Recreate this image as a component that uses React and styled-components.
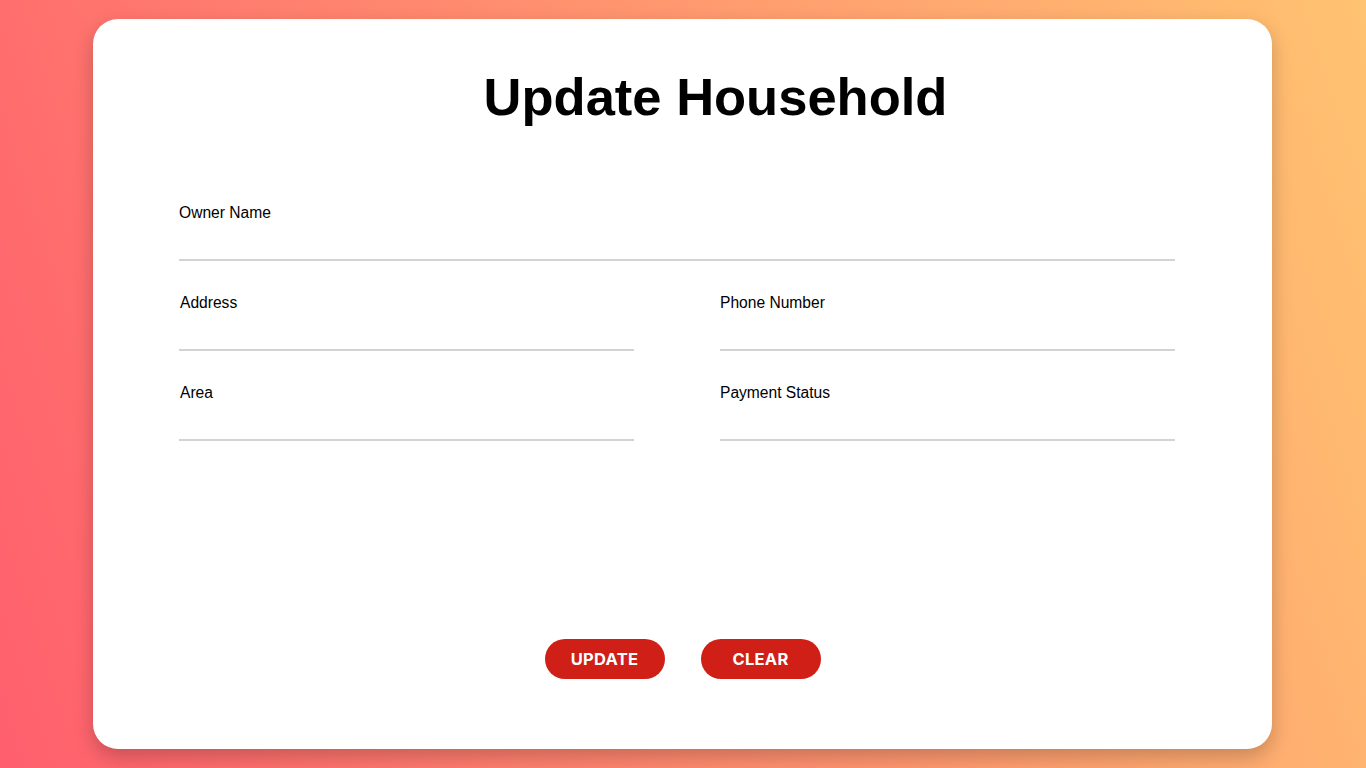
import React from "react";
import styled, { createGlobalStyle } from "styled-components";

const GlobalStyle = createGlobalStyle`
  * { box-sizing: border-box; }
  html, body { margin: 0; padding: 0; }
  body {
    font-family: "Liberation Sans", Arial, sans-serif;
    background: linear-gradient(72deg, #ff5f6d, #ffc371);
    min-height: 100vh;
  }
`;

const Page = styled.div`
  width: 100%;
  height: 100vh;
  padding-right: 1px;
  display: flex;
  align-items: center;
  justify-content: center;
`;

const Card = styled.div`
  width: 1179px;
  height: 730px;
  background: #ffffff;
  border-radius: 25px;
  box-shadow: 0 8px 20px rgba(0, 0, 0, 0.22);
  padding: 48px 97px 70px 86px;
  display: flex;
  flex-direction: column;
`;

const Title = styled.h1`
  margin: 0;
  padding-left: 77px;
  text-align: center;
  font-family: "Liberation Sans", Arial, sans-serif;
  font-weight: 700;
  font-size: 52.5px;
  line-height: 60px;
  color: #000;
`;

const Form = styled.form`
  margin-top: 77px;
  display: grid;
  grid-template-columns: 455px 455px;
  column-gap: 86px;
  row-gap: 33px;
  flex: 1;
  align-content: start;
`;

const Field = styled.div`
  display: flex;
  flex-direction: column;
  grid-column: ${(p) => (p.$full ? "1 / -1" : "auto")};
`;

const Label = styled.label`
  font-size: 15.6px;
  line-height: 18px;
  color: #000;
  padding-left: ${(p) => (p.$nudge ? "1px" : "0")};
`;

const Input = styled.input`
  height: 39px;
  border: none;
  border-bottom: 2px solid #d3d3d3;
  background: transparent;
  outline: none;
  font-family: "Liberation Sans", Arial, sans-serif;
  font-size: 16px;
  padding: 0;
`;

const Actions = styled.div`
  display: flex;
  justify-content: center;
  gap: 36px;
  margin: 0 -97px 0 -86px;
`;

const Button = styled.button`
  width: 120px;
  height: 40px;
  border: none;
  border-radius: 20px;
  background: #cf1f16;
  color: #ffffff;
  font-family: Inter, "Open Sans", sans-serif;
  font-weight: 700;
  font-size: 16.5px;
  letter-spacing: 0.3px;
  cursor: pointer;
`;

export default function App() {
  return (
    <>
      <GlobalStyle />
      <Page>
        <Card>
          <Title>Update Household</Title>
          <Form onSubmit={(e) => e.preventDefault()}>
            <Field $full>
              <Label>Owner Name</Label>
              <Input type="text" />
            </Field>
            <Field>
              <Label $nudge>Address</Label>
              <Input type="text" />
            </Field>
            <Field>
              <Label>Phone Number</Label>
              <Input type="text" />
            </Field>
            <Field>
              <Label $nudge>Area</Label>
              <Input type="text" />
            </Field>
            <Field>
              <Label>Payment Status</Label>
              <Input type="text" />
            </Field>
          </Form>
          <Actions>
            <Button type="button">UPDATE</Button>
            <Button type="button">CLEAR</Button>
          </Actions>
        </Card>
      </Page>
    </>
  );
}
